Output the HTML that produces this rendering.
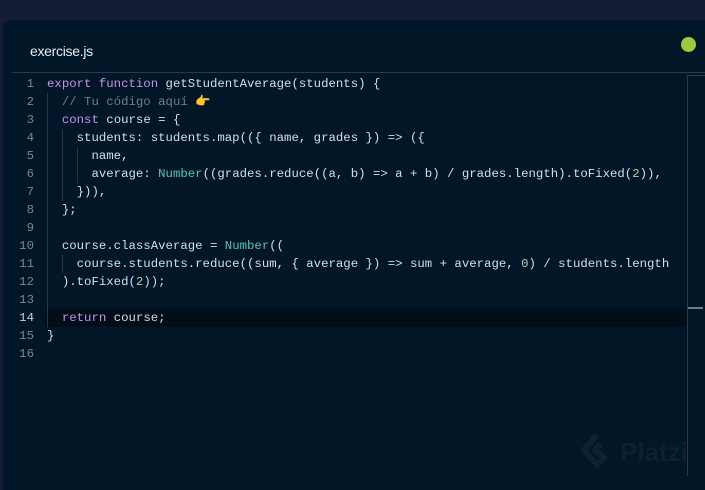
<!DOCTYPE html>
<html><head><meta charset="utf-8"><style>
*{margin:0;padding:0;box-sizing:border-box}
body{width:705px;height:476px;background:#141d36;overflow:hidden;position:relative;font-family:"Liberation Sans",sans-serif}
.panel{position:absolute;left:3px;top:20px;width:710px;height:470px;background:#011627;border-radius:7px 0 0 0}
.title{position:absolute;left:30px;top:43px;color:#e6edf3;font-size:14px;letter-spacing:-0.3px}
.dot{position:absolute;left:681px;top:37px;width:15px;height:15px;border-radius:50%;background:#9ccc3c}
.hr{position:absolute;left:12px;top:72px;width:693px;height:1px;background:#2b3a4a}
.code{position:absolute;left:0;top:75px;font-family:"Liberation Mono",monospace;font-size:12.35px}
.l{position:absolute;left:0;height:18px;line-height:18px;white-space:pre;width:690px}
.n{position:absolute;left:0;width:34px;text-align:right;color:#7d8590}
.t{position:absolute;left:47px;color:#d6deeb}
.k{color:#c792ea}.c{color:#6e7d8c}.f{color:#4ec9b0}.d{color:#b5cea8}
.g{position:absolute;width:1px;background:#2a3646}
.cur{position:absolute;left:45px;top:309px;width:642px;height:18px;background:#010e19}
.sb{position:absolute;left:687px;top:75px;width:1px;height:401px;background:#2b3a4a}
.sbt{position:absolute;left:687px;top:75px;width:18px;height:1px;background:#2b3a4a}
.sbm{position:absolute;left:688px;top:307px;width:15px;height:2px;background:#6b7c8c}
.wm{position:absolute;color:#0e2030;font-weight:bold}
</style></head><body>
<div class="panel"></div>
<div class="title">exercise.js</div>
<div class="dot"></div>
<div class="hr"></div>
<div class="cur"></div>
<div class="sb"></div><div class="sbt"></div><div class="sbm"></div>
<div class="g" style="left:47px;top:93px;height:234px"></div>
<div class="g" style="left:62px;top:129px;height:72px"></div>
<div class="g" style="left:77px;top:147px;height:36px"></div>
<div class="g" style="left:62px;top:255px;height:18px"></div>
<div class="code">
<div class="l" style="top:0"><span class="n">1</span><span class="t"><span class="k">export function</span> getStudentAverage(students) {</span></div>
<div class="l" style="top:18px"><span class="n">2</span><span class="t">  <span class="c">// Tu código aquí</span> <span style="color:#f0a830">👉</span></span></div>
<div class="l" style="top:36px"><span class="n">3</span><span class="t">  <span class="k">const</span> course = {</span></div>
<div class="l" style="top:54px"><span class="n">4</span><span class="t">    students: students.map(({ name, grades }) =&gt; ({</span></div>
<div class="l" style="top:72px"><span class="n">5</span><span class="t">      name,</span></div>
<div class="l" style="top:90px"><span class="n">6</span><span class="t">      average: <span class="f">Number</span>((grades.reduce((a, b) =&gt; a + b) / grades.length).toFixed(<span class="d">2</span>)),</span></div>
<div class="l" style="top:108px"><span class="n">7</span><span class="t">    })),</span></div>
<div class="l" style="top:126px"><span class="n">8</span><span class="t">  };</span></div>
<div class="l" style="top:144px"><span class="n">9</span><span class="t"></span></div>
<div class="l" style="top:162px"><span class="n">10</span><span class="t">  course.classAverage = <span class="f">Number</span>((</span></div>
<div class="l" style="top:180px"><span class="n">11</span><span class="t">    course.students.reduce((sum, { average }) =&gt; sum + average, <span class="d">0</span>) / students.length</span></div>
<div class="l" style="top:198px"><span class="n">12</span><span class="t">  ).toFixed(<span class="d">2</span>));</span></div>
<div class="l" style="top:216px"><span class="n">13</span><span class="t"></span></div>
<div class="l" style="top:234px"><span class="n" style="color:#c8d0d8">14</span><span class="t">  <span class="k">return</span> course;</span></div>
<div class="l" style="top:252px"><span class="n">15</span><span class="t">}</span></div>
<div class="l" style="top:270px"><span class="n">16</span><span class="t"></span></div>
</div>
<svg style="position:absolute;left:580px;top:432px" width="30" height="42" viewBox="0 0 30 42"><path d="M17 3 L4 18 L17 33 L24 26 L15 18 L20 12" fill="none" stroke="#0d2230" stroke-width="6"/></svg>
<div class="wm" style="left:620px;top:437px;font-size:26px">Platzi</div>
</body></html>
